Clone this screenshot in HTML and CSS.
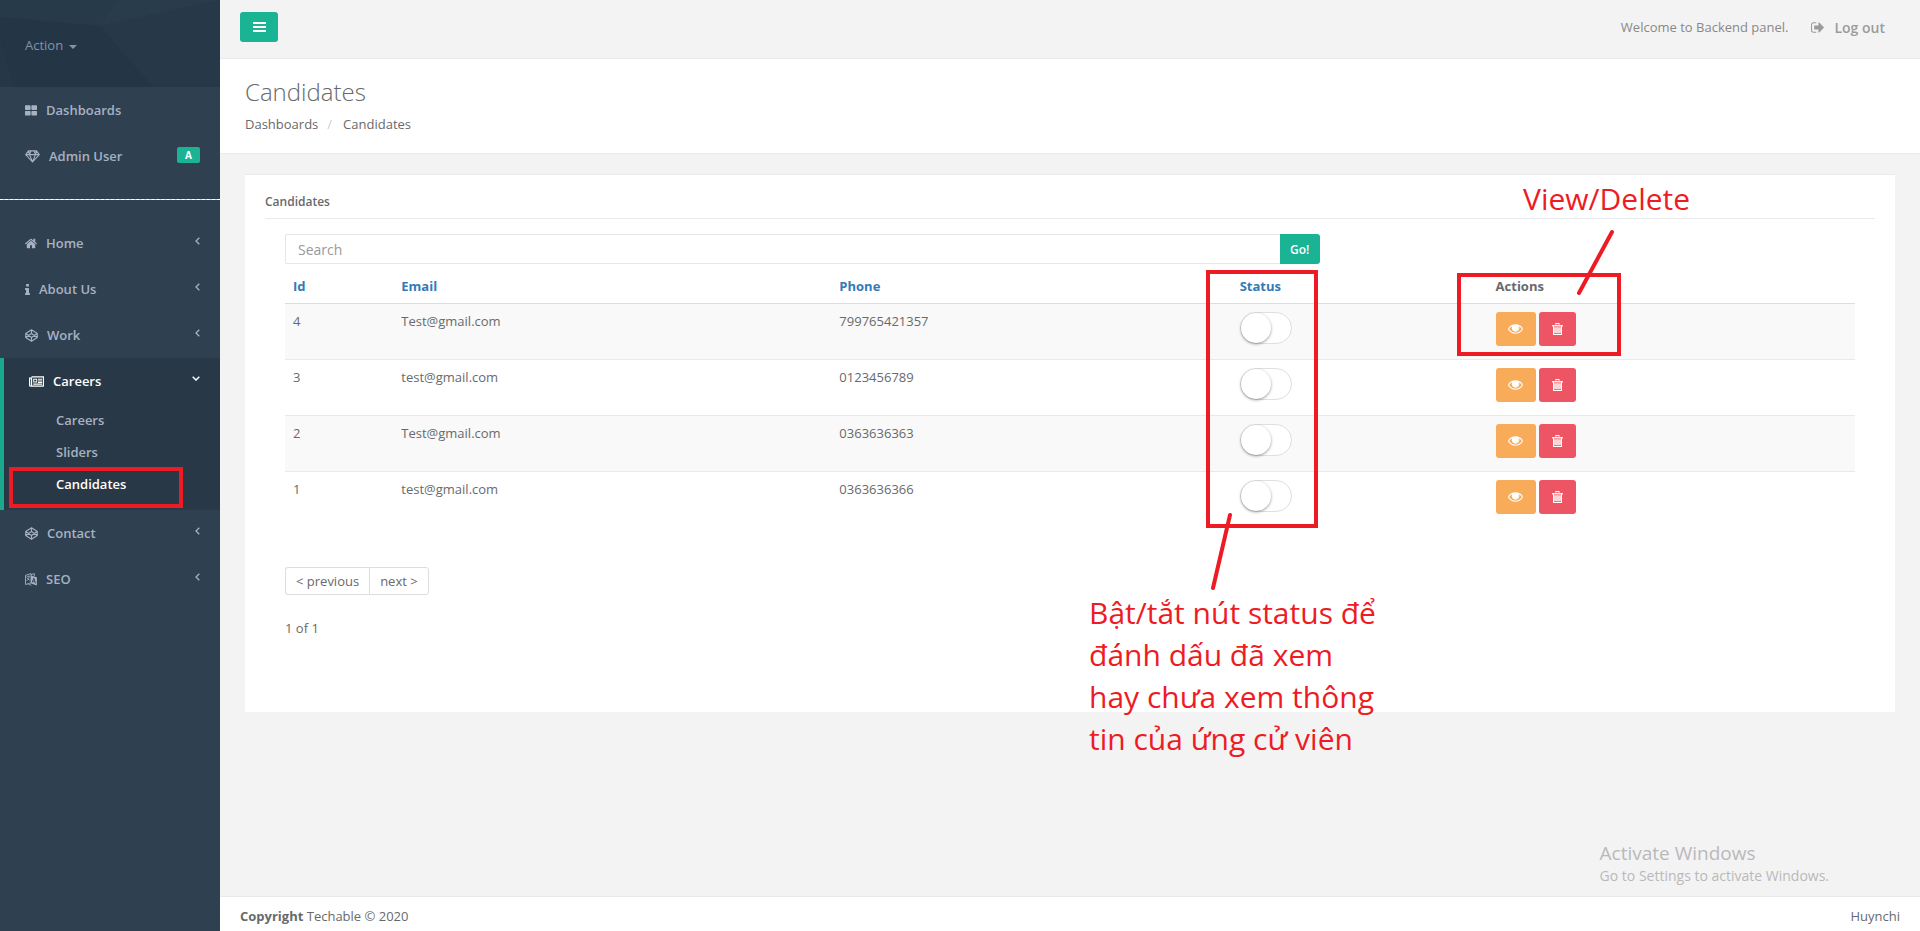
FILE: index.html
```html
<!DOCTYPE html>
<html lang="en">
<head>
<meta charset="utf-8">
<title>Candidates</title>
<link rel="stylesheet" href="styles.css">
</head>
<body>
<svg class="defs" aria-hidden="true">
  <symbol id="i-large" viewBox="0 0 12 12"><path d="M0 1.500Q0 .8.7.8H4.900Q5.600.8 5.600 1.500V4.700Q5.600 5.400 4.900 5.400H.7Q0 5.400 0 4.700zM6.400 1.500Q6.400.8 7.100.8H11.300Q12 .8 12 1.500V4.700Q12 5.400 11.300 5.400H7.100Q6.400 5.400 6.400 4.700zM0 7.100Q0 6.400.7 6.400H4.900Q5.600 6.400 5.600 7.100V10.300Q5.600 11 4.900 11H.7Q0 11 0 10.300zM6.400 7.100Q6.400 6.400 7.100 6.400H11.300Q12 6.400 12 7.100V10.300Q12 11 11.300 11H7.100Q6.400 11 6.400 10.300z"/></symbol>
  <symbol id="i-diamond" viewBox="0 0 15 13"><path d="M3.500.9H11.500L14.300 4.600 7.500 12 .7 4.600zM.7 4.600H14.300M5.900.9 4.500 4.600 7.500 12 10.500 4.600 9.100.9M3.500.9 4.500 4.600M11.500.9 10.500 4.600" fill="none" stroke="currentColor" stroke-width="1.100" stroke-linejoin="round"/></symbol>
  <symbol id="i-home" viewBox="80 200 1632 1400"><path d="M1472 992v480q0 26-19 45t-45 19h-384v-384h-256v384h-384q-26 0-45-19t-19-45v-480q0-1 .5-3t.5-3l575-474 575 474q1 2 1 6zm223-69l-62 74q-8 9-21 11h-3q-13 0-21-7l-692-577-692 577q-12 8-24 7-13-2-21-11l-62-74q-8-10-7-23.500t11-21.500l719-599q32-26 76-26t76 26l244 204v-195q0-14 9-23t23-9h192q14 0 23 9t9 23v408l219 182q10 8 11 21.500t-7 23.500z"/></symbol>
  <symbol id="i-info" viewBox="576 128 640 1408"><path d="M1216 1344v128q0 26-19 45t-45 19h-512q-26 0-45-19t-19-45v-128q0-26 19-45t45-19h64v-384h-64q-26 0-45-19t-19-45v-128q0-26 19-45t45-19h384q26 0 45 19t19 45v576h64q26 0 45 19t19 45zm-128-1152v192q0 26-19 45t-45 19h-256q-26 0-45-19t-19-45v-192q0-26 19-45t45-19h256q26 0 45 19t19 45z"/></symbol>
  <symbol id="i-codepen" viewBox="0 0 14 14"><path d="M7 .9 13.200 4.900V9.100L7 13.100.8 9.100V4.900zM7 .9V4.800M7 9.200V13.100M.8 4.900 7 9.200 13.200 4.900M.8 9.100 7 4.800 13.200 9.100" fill="none" stroke="currentColor" stroke-width="1.200" stroke-linejoin="round"/></symbol>
  <symbol id="i-news" viewBox="0 0 16 12"><path d="M2.700 1H15.400V10.200Q15.400 11 14.600 11H1.700Q.6 11 .6 9.900V2.300H2.700V9.900Q2.700 11 1.700 11" fill="none" stroke="currentColor" stroke-width="1.300"/><path d="M4.500 3H8.700V7H4.500zM5.500 4V6H7.700V4zM9.600 3H13.900V4.100H9.600zM9.600 4.800H13.900V5.900H9.600zM9.600 6.500H13.900V7.500H9.600zM4.500 8.200H13.900V9.400H4.500z" fill-rule="evenodd"/></symbol>
  <symbol id="i-lang" viewBox="0 0 12 13"><path d="M.5 2.300 6 .6V9.800L.5 11.500zM6 1.800 9.300.5V3" fill="none" stroke="currentColor" stroke-width=".9"/><path d="M1.500 4 4.900 3M3.100 2.500V3.600M4.400 3.500Q3.800 6.500 1.600 8M2 4.800Q3 6.700 4.900 7.200M3 11 6.400 12.300" fill="none" stroke="currentColor" stroke-width=".8"/><path d="M6 2.400 11.900 4.200V12.500L6 10.600zM8.400 4.900 6.900 9.200 7.800 9.500 8.100 8.500 9.600 9 9.900 10.200 10.900 10.500 9.400 5.200zM8.900 6.200 9.400 8 8.400 7.700z" fill-rule="evenodd"/></symbol>
  <symbol id="i-left" viewBox="0 0 5 8"><path d="M4.300.7 1 4 4.300 7.300" fill="none" stroke="currentColor" stroke-width="1.300"/></symbol>
  <symbol id="i-down" viewBox="0 0 8 5"><path d="M.7.7 4 4 7.300.7" fill="none" stroke="currentColor" stroke-width="1.500"/></symbol>
  <symbol id="i-out" viewBox="64 256 1568 1280"><path d="M704 1440q0 4 1 20t.5 26.500-3 23.500-10 19.500-20.500 6.500h-320q-119 0-203.500-84.500t-84.500-203.500v-704q0-119 84.500-203.500t203.500-84.500h320q13 0 22.500 9.500t9.500 22.500q0 4 1 20t.5 26.500-3 23.500-10 19.500-20.500 6.500h-320q-66 0-113 47t-47 113v704q0 66 47 113t113 47h312l11.500 1 11.500 3 8 5.500 7 9 2 13.500zm928-544q0 26-19 45l-544 544q-19 19-45 19t-45-19-19-45v-288h-448q-26 0-45-19t-19-45v-384q0-26 19-45t45-19h448v-288q0-26 19-45t45-19 45 19l544 544q19 19 19 45z"/></symbol>
  <symbol id="i-eye" viewBox="0 384 1792 1152"><path d="M1664 960q-152-236-381-353 61 104 61 225 0 185-131.500 316.500t-316.500 131.500-316.500-131.500-131.500-316.500q0-121 61-225-229 117-381 353 133 205 333.500 326.500t434.500 121.500 434.500-121.500 333.500-326.500zm-720-384q0-20-14-34t-34-14q-125 0-214.500 89.500t-89.500 214.500q0 20 14 34t34 14 34-14 14-34q0-86 61-147t147-61q20 0 34-14t14-34zm848 384q0 34-20 69-140 230-376.500 368.500t-499.500 138.500-499.500-139-376.500-368q-20-35-20-69t20-69q140-229 376.500-368t499.500-139 499.500 139 376.500 368q20 35 20 69z"/><circle cx="896" cy="850" r="330"/></symbol>
  <symbol id="i-trash" viewBox="0 0 11 12"><path d="M0 2.200H11V3.200H10V11Q10 12 9 12H2Q1 12 1 11V3.200H0zM3.500 2.200V1Q3.500.1 4.400.1H6.600Q7.500.1 7.500 1V2.200H6.600V1H4.400V2.200z" fill-rule="evenodd" opacity=".75"/><path d="M0 2.200H11V3.200H0zM1 3.200H2V12H1zM9 3.200H10V12H9zM1 11H10V12H1zM3.500.1H7.500V1H3.500z"/><path d="M2 3.500H9V4.200H2zM2 10H9V10.700H2z" class="trash-gap"/></symbol>
</svg>

<aside class="sidebar">
  <div class="profile">
    <svg class="pattern" viewBox="0 0 220 87" preserveAspectRatio="none" aria-hidden="true">
      <path fill="#263a4a" d="M0 0H220V87H0z"/>
      <path fill="#283c4b" d="M118 0H220L100 26z"/>
      <path fill="#273949" d="M100 26 220 0V87H153z"/>
      <path fill="#243646" d="M0 17 100 26 153 87H0z"/>
      <path fill="#253848" d="M0 40 14 87H0z"/>
    </svg>
    <button class="action" type="button">Action <span class="caret"></span></button>
  </div>
  <nav>
    <ul class="menu">
      <li><a href="#"><svg class="w12"><use href="#i-large"/></svg>Dashboards</a></li>
      <li><a href="#"><svg class="w15"><use href="#i-diamond"/></svg>Admin User<span class="badge">A</span></a></li>
    </ul>
    <hr class="split">
    <ul class="menu">
      <li><a href="#"><svg class="w12"><use href="#i-home"/></svg>Home<svg class="arrow"><use href="#i-left"/></svg></a></li>
      <li><a href="#"><svg class="w5"><use href="#i-info"/></svg>About Us<svg class="arrow"><use href="#i-left"/></svg></a></li>
      <li><a href="#"><svg class="w13"><use href="#i-codepen"/></svg>Work<svg class="arrow"><use href="#i-left"/></svg></a></li>
      <li class="active"><a href="#"><svg class="w15"><use href="#i-news"/></svg>Careers<svg class="arrow open"><use href="#i-down"/></svg></a>
        <ul class="sub">
          <li><a href="#">Careers</a></li>
          <li><a href="#">Sliders</a></li>
          <li><a href="#" class="current">Candidates</a></li>
        </ul>
      </li>
      <li><a href="#"><svg class="w13"><use href="#i-codepen"/></svg>Contact<svg class="arrow"><use href="#i-left"/></svg></a></li>
      <li><a href="#"><svg class="w12"><use href="#i-lang"/></svg>SEO<svg class="arrow"><use href="#i-left"/></svg></a></li>
    </ul>
  </nav>
</aside>

<div class="page">
  <header class="topbar">
    <button class="toggle-nav" type="button" aria-label="Toggle menu"><svg viewBox="0 0 13 10"><path d="M0 0H13V2H0zM0 4H13V6H0zM0 8H13V10H0z"/></svg></button>
    <div class="top-right">
      <span>Welcome to Backend panel.</span>
      <a href="#"><svg><use href="#i-out"/></svg>Log out</a>
    </div>
  </header>
  <section class="heading">
    <h1>Candidates</h1>
    <ol class="crumbs"><li><a href="#">Dashboards</a></li><li><a href="#">Candidates</a></li></ol>
  </section>
  <main class="content">
    <section class="card">
      <h2>Candidates</h2>
      <div class="card-body">
        <form class="search">
          <input type="text" placeholder="Search" aria-label="Search">
          <button type="button">Go!</button>
        </form>
        <table>
          <colgroup><col class="c-id"><col class="c-email"><col class="c-phone"><col class="c-status"><col></colgroup>
          <thead><tr><th><a href="#">Id</a></th><th><a href="#">Email</a></th><th><a href="#">Phone</a></th><th><a href="#">Status</a></th><th>Actions</th></tr></thead>
          <tbody>
            <tr><td>4</td><td>Test@gmail.com</td><td>799765421357</td><td><input class="switch" type="checkbox" aria-label="Status 4"></td><td><div class="btns"><button class="view" type="button" aria-label="View"><svg><use href="#i-eye"/></svg></button><button class="del" type="button" aria-label="Delete"><svg><use href="#i-trash"/></svg></button></div></td></tr>
            <tr><td>3</td><td>test@gmail.com</td><td>0123456789</td><td><input class="switch" type="checkbox" aria-label="Status 3"></td><td><div class="btns"><button class="view" type="button" aria-label="View"><svg><use href="#i-eye"/></svg></button><button class="del" type="button" aria-label="Delete"><svg><use href="#i-trash"/></svg></button></div></td></tr>
            <tr><td>2</td><td>Test@gmail.com</td><td>0363636363</td><td><input class="switch" type="checkbox" aria-label="Status 2"></td><td><div class="btns"><button class="view" type="button" aria-label="View"><svg><use href="#i-eye"/></svg></button><button class="del" type="button" aria-label="Delete"><svg><use href="#i-trash"/></svg></button></div></td></tr>
            <tr><td>1</td><td>test@gmail.com</td><td>0363636366</td><td><input class="switch" type="checkbox" aria-label="Status 1"></td><td><div class="btns"><button class="view" type="button" aria-label="View"><svg><use href="#i-eye"/></svg></button><button class="del" type="button" aria-label="Delete"><svg><use href="#i-trash"/></svg></button></div></td></tr>
          </tbody>
        </table>
        <div class="pager"><a href="#">&lt; previous</a><a href="#">next &gt;</a></div>
        <p class="count">1 of 1</p>
      </div>
    </section>
  </main>
  <footer class="footer"><span><strong>Copyright</strong> Techable © 2020</span><span>Huynchi</span></footer>
</div>

<div class="box box-menu"></div>
<div class="box box-status"></div>
<div class="box box-actions"></div>
<svg class="lines" aria-hidden="true"><path d="M1612 232 1579 293M1230 515 1213 588"/></svg>
<p class="note note-actions">View/Delete</p>
<p class="note note-status">Bật/tắt nút status để<br>đánh dấu đã xem<br>hay chưa xem thông<br>tin của ứng cử viên</p>
<div class="watermark"><p class="wm-title">Activate Windows</p><p>Go to Settings to activate Windows.</p></div>
</body>
</html>
```

FILE: styles.css
```css
* { box-sizing: border-box; }
body {
  margin: 0;
  display: flex;
  min-height: 100vh;
  position: relative;
  background: #2f4050;
  color: #676a6c;
  font: 13px/19px "Open Sans", "Noto Sans", sans-serif;
}
a { color: inherit; text-decoration: none; }
ul, ol { list-style: none; margin: 0; padding: 0; }
h1, h2, p { margin: 0; }
button, input { font: inherit; }
button { border: 0; cursor: pointer; }
svg { fill: currentColor; flex: none; }
.defs { position: absolute; width: 0; height: 0; }

/* Sidebar */
.sidebar { width: 220px; flex: none; color: #a7b1c2; }
.profile { position: relative; height: 87px; padding: 36px 25px; }
.pattern { position: absolute; inset: 0; width: 100%; height: 100%; }
.action {
  position: relative;
  display: flex;
  align-items: center;
  gap: 6px;
  padding: 0;
  background: none;
  color: #8095a8;
}
.caret { border: 4px solid transparent; border-top-color: currentColor; border-bottom: 0; margin-top: 2px; }
.menu { font-weight: 600; }
.menu > li > a { display: flex; align-items: center; gap: 9px; height: 46px; padding: 0 20px 0 25px; }
.menu svg { height: 13px; }
.menu .w5 { width: 5px; }
.menu .w12 { width: 12px; }
.menu .w13 { width: 13px; }
.menu .w15 { width: 15px; }
.menu .arrow { width: 5px; height: 8px; margin: 0 0 5px auto; }
.menu .arrow.open { width: 8px; height: 5px; }
.badge {
  margin: 0 0 2px auto;
  padding: 0 8px;
  border-radius: 2px;
  background: #1ab394;
  color: #fff;
  font-size: 10px;
  line-height: 16px;
  font-weight: 700;
}
.split { margin: 20px 0; border: 0; border-top: 1px dashed #fff; background: #c8d3db; }
.menu > .active { border-left: 4px solid #19aa8d; background: #293846; padding-bottom: 10px; }
.menu > .active > a { color: #fff; }
.sub a { display: block; padding: 7px 10px 6px 52px; }
.sub .current { color: #fff; }

/* Page */
.page { flex: 1; min-width: 0; display: flex; flex-direction: column; background: #f3f3f4; }
.topbar {
  display: flex;
  justify-content: space-between;
  align-items: flex-start;
  padding: 12px 35px 16px 20px;
  border-bottom: 1px solid #e7eaec;
}
.toggle-nav {
  display: flex;
  align-items: center;
  justify-content: center;
  width: 38px;
  height: 30px;
  padding: 0;
  border-radius: 3px;
  background: #1ab394;
  color: #fff;
}
.toggle-nav svg { width: 13px; height: 10px; }
.top-right { display: flex; align-items: center; gap: 23px; padding-top: 6px; color: #888; }
.top-right a { display: flex; align-items: center; gap: 10px; color: #999c9e; font-size: 14px; font-weight: 600; }
.top-right svg { width: 13px; height: 11px; }
.heading { padding: 19px 25px; background: #fff; border-bottom: 1px solid #e7eaec; }
.heading h1 { font-size: 24px; line-height: 28px; font-weight: 300; }
.crumbs { display: flex; margin-top: 9px; }
.crumbs li + li::before { content: "/"; padding: 0 11px 0 9px; color: #ccc; }
.content { flex: 1; padding: 20px 25px 40px; }
.card { min-height: 538px; padding: 17px 20px 65px; background: #fff; border-top: 1px solid #e7eaec; }
.card h2 { padding-bottom: 6px; border-bottom: 1px solid #e7eaec; font-size: 12px; line-height: 20px; font-weight: 600; }
.card-body { padding: 15px 20px 0; }
.search { display: flex; width: 65.9%; }
.search input {
  flex: 1;
  min-width: 0;
  height: 30px;
  padding: 0 12px;
  border: 1px solid #e5e6e7;
  border-right: 0;
  border-radius: 2px 0 0 2px;
  outline: 0;
  font-size: 14px;
}
.search input::placeholder { color: #999; }
.search button { width: 40px; padding: 0; border-radius: 0 3px 3px 0; background: #1ab394; color: #fff; font-size: 12px; font-weight: 600; }
table { width: 100%; margin-top: 5px; table-layout: fixed; border-collapse: separate; border-spacing: 0; }
.c-id { width: 6.9%; }
.c-email { width: 27.9%; }
.c-phone { width: 25.5%; }
.c-status { width: 16.3%; }
th { padding: 8px 8px 7px; border-bottom: 1px solid #ddd; text-align: left; font-weight: 700; }
th a { color: #337ab7; }
td { height: 56px; padding: 8px; border-bottom: 1px solid #e7eaec; vertical-align: top; }
tbody tr:nth-child(odd) { background: #f9f9f9; }
tbody tr:last-child td { border-bottom: 0; }
.switch {
  appearance: none;
  display: block;
  width: 52px;
  height: 32px;
  margin: 0;
  border: 1px solid #dfdfdf;
  border-radius: 20px;
  background: #fff;
}
.switch::before {
  content: "";
  display: block;
  width: 30px;
  height: 30px;
  border-radius: 50%;
  background: #fff;
  box-shadow: 0 1px 3px rgba(0, 0, 0, .4);
}
.switch:checked { background: #1ab394; }
.switch:checked::before { margin-left: auto; }
.btns { display: flex; gap: 3px; color: #fff; }
.btns button { display: flex; align-items: center; justify-content: center; height: 34px; padding: 0; border-radius: 3px; color: #fff; }
.view { width: 40px; background: #f8ac59; }
.view svg { width: 15px; height: 10px; }
.del { width: 37px; background: #ed5565; }
.del svg { width: 11px; height: 12px; }
.trash-gap { fill: #ed5565; }
.pager { display: flex; margin-top: 39px; }
.pager a { padding: 4px 10px 3px; border: 1px solid #ddd; border-radius: 0 3px 3px 0; }
.pager a:first-child { border-right: 0; border-radius: 3px 0 0 3px; }
.count { margin-top: 24px; }
.footer { display: flex; justify-content: space-between; padding: 10px 20px 5px; background: #fff; border-top: 1px solid #e7eaec; }

/* Annotations drawn over the page */
.box { position: absolute; border: 4px solid #ed1c24; pointer-events: none; }
.box-menu { left: 9px; top: 467px; width: 174px; height: 41px; }
.box-status { left: 1206px; top: 270px; width: 112px; height: 258px; }
.box-actions { left: 1457px; top: 273px; width: 164px; height: 83px; }
.lines { position: absolute; left: 0; top: 0; width: 100%; height: 100%; pointer-events: none; fill: none; stroke: #ed1c24; stroke-width: 4; stroke-linecap: round; }
.note { position: absolute; color: #ed1c24; font-size: 30px; line-height: 42px; white-space: nowrap; }
.note-actions { left: 1523px; top: 178px; }
.note-status { left: 1089px; top: 592px; }
.watermark { position: absolute; right: 91px; bottom: 45px; color: #b9b9ba; font-size: 14px; line-height: 20px; }
.wm-title { font-size: 19px; line-height: 25px; }
```
